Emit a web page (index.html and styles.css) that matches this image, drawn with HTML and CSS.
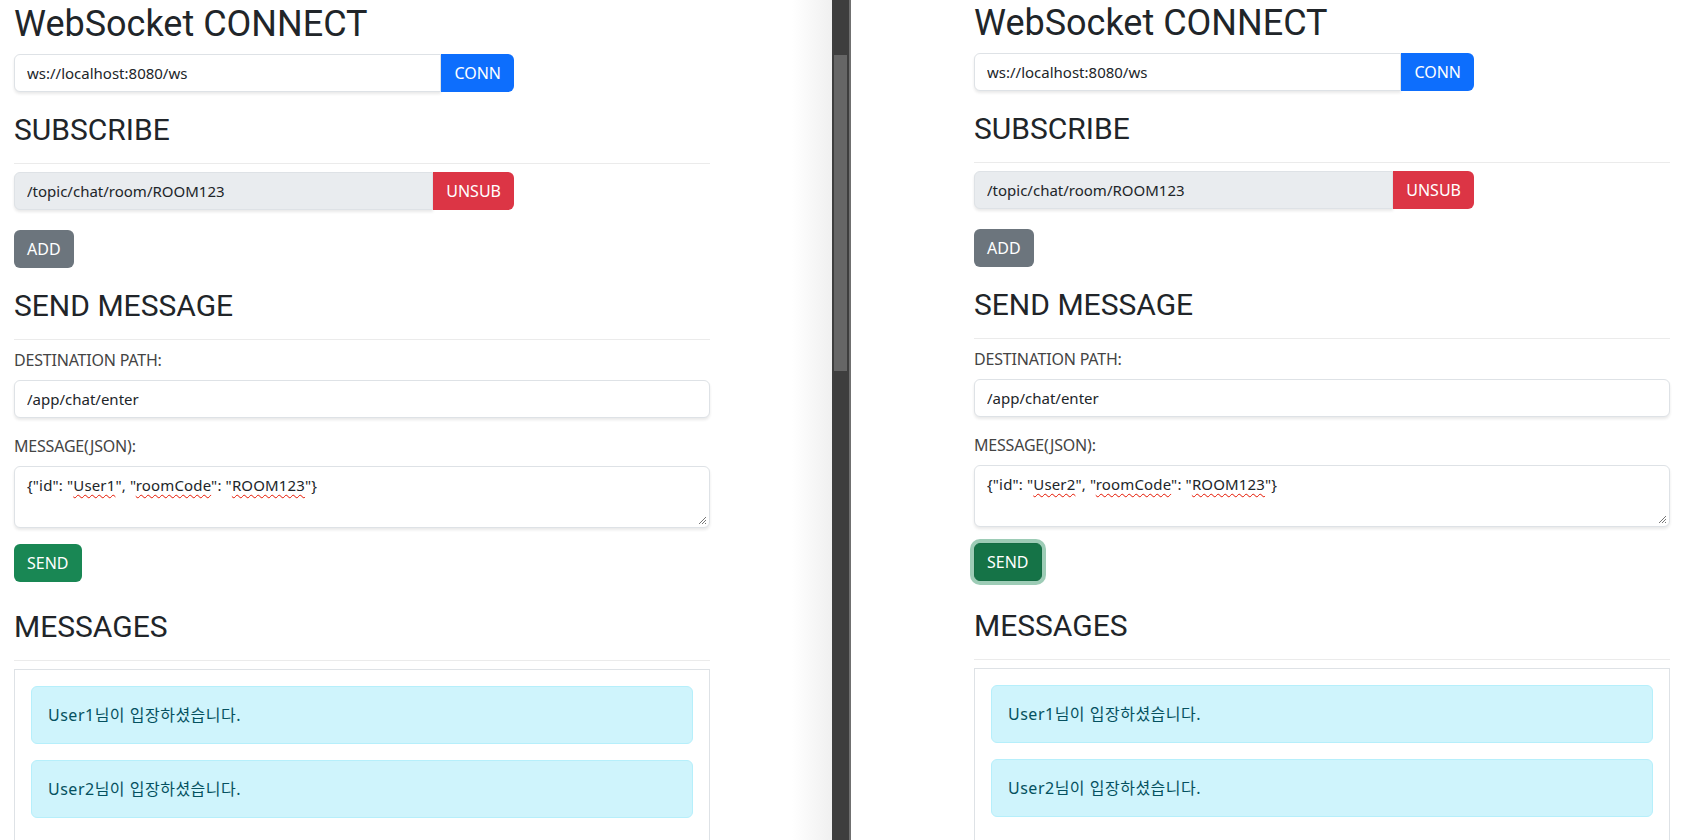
FILE: index.html
```html
<!DOCTYPE html>
<html lang="ko">
<head>
  <meta charset="UTF-8">
  <meta name="viewport" content="width=device-width, initial-scale=1">
  <title>WebSocket Test</title>
  <link rel="stylesheet" href="styles.css">
</head>
<body>
  <div class="desktop">

    <!-- 왼쪽 창 (User1) -->
    <section class="window">
      <div class="page">
        <h1 class="title">WebSocket CONNECT</h1>
        <div class="input-group">
          <input class="form-control" type="text" value="ws://localhost:8080/ws">
          <button class="btn btn-primary">CONN</button>
        </div>

        <h2 class="section-title">SUBSCRIBE</h2>
        <hr>
        <div class="input-group">
          <input class="form-control" type="text" value="/topic/chat/room/ROOM123" readonly>
          <button class="btn btn-danger">UNSUB</button>
        </div>
        <button class="btn btn-secondary btn-add">ADD</button>

        <h2 class="section-title">SEND MESSAGE</h2>
        <hr>
        <div class="field">
          <label class="form-label">DESTINATION PATH:</label>
          <input class="form-control" type="text" value="/app/chat/enter">
        </div>
        <div class="field">
          <label class="form-label">MESSAGE(JSON):</label>
          <div class="form-control textarea">{"id": "<span class="typo">User1</span>", "<span class="typo">roomCode</span>": "<span class="typo">ROOM123</span>"}<svg class="grip" width="10" height="10" viewBox="0 0 10 10"><path d="M9 2 L2 9 M9 5 L5 9 M9 8 L8 9" stroke="#777" stroke-width="1" fill="none"/></svg></div>
        </div>
        <button class="btn btn-success">SEND</button>

        <h2 class="section-title messages-title">MESSAGES</h2>
        <hr>
        <div class="messages">
          <div class="alert">User1님이 입장하셨습니다.</div>
          <div class="alert">User2님이 입장하셨습니다.</div>
        </div>
      </div>
    </section>

    <div class="scrollbar"><div class="thumb"></div></div>
    <div class="split"></div>

    <!-- 오른쪽 창 (User2) -->
    <section class="window window-right">
      <div class="page">
        <h1 class="title">WebSocket CONNECT</h1>
        <div class="input-group">
          <input class="form-control" type="text" value="ws://localhost:8080/ws">
          <button class="btn btn-primary">CONN</button>
        </div>

        <h2 class="section-title">SUBSCRIBE</h2>
        <hr>
        <div class="input-group">
          <input class="form-control" type="text" value="/topic/chat/room/ROOM123" readonly>
          <button class="btn btn-danger">UNSUB</button>
        </div>
        <button class="btn btn-secondary btn-add">ADD</button>

        <h2 class="section-title">SEND MESSAGE</h2>
        <hr>
        <div class="field">
          <label class="form-label">DESTINATION PATH:</label>
          <input class="form-control" type="text" value="/app/chat/enter">
        </div>
        <div class="field">
          <label class="form-label">MESSAGE(JSON):</label>
          <div class="form-control textarea">{"id": "<span class="typo">User2</span>", "<span class="typo">roomCode</span>": "<span class="typo">ROOM123</span>"}<svg class="grip" width="10" height="10" viewBox="0 0 10 10"><path d="M9 2 L2 9 M9 5 L5 9 M9 8 L8 9" stroke="#777" stroke-width="1" fill="none"/></svg></div>
        </div>
        <button class="btn btn-success focused">SEND</button>

        <h2 class="section-title messages-title">MESSAGES</h2>
        <hr>
        <div class="messages">
          <div class="alert">User1님이 입장하셨습니다.</div>
          <div class="alert">User2님이 입장하셨습니다.</div>
        </div>
      </div>
    </section>

  </div>
</body>
</html>
```

FILE: styles.css
```css
* {
  box-sizing: border-box;
}

body {
  margin: 0;
  font-family: "Noto Sans", "Noto Sans CJK KR", sans-serif;
  font-size: 16px;
  line-height: 24px;
  color: #212529;
  background: #fff;
  overflow: hidden;
}

.desktop {
  display: flex;
  height: 840px;
}

/* Browser windows */
.window {
  flex: none;
  width: 832px;
  padding: 5px 0 0 14px;
  overflow: hidden;
  background: linear-gradient(to right, #fff calc(100% - 40px), #f0f0f0 100%);
}

.window-right {
  flex: 1;
  width: auto;
  padding: 4px 0 0 123px;
  background: #fff;
}

.scrollbar {
  flex: none;
  width: 17px;
  padding: 55px 2px 0;
  background: #3e3e3e;
}

.thumb {
  height: 316px;
  background: #666;
}

.split {
  flex: none;
  width: 2px;
  background: #707070;
}

.page {
  width: 696px;
}

/* Headings */
.title,
.section-title {
  margin: 0;
  font-family: Roboto, sans-serif;
  font-weight: 400;
  line-height: 38px;
  color: #212529;
}

.title {
  font-size: 36px;
  margin-bottom: 11px;
}

.section-title {
  font-size: 30px;
  margin: 19px 0 14px;
}

.messages-title {
  margin-top: 26px;
}

hr {
  margin: 0 0 8px;
  border: 0;
  border-top: 1px solid #ebebeb;
}

/* Form controls */
.input-group {
  display: flex;
  width: 500px;
}

.form-control {
  display: block;
  width: 100%;
  height: 38px;
  padding: 6px 12px;
  font: inherit;
  font-size: 15px;
  color: #212529;
  background: #fff;
  border: 1px solid #dee2e6;
  border-radius: 6px;
  box-shadow: 0 2px 3px rgba(0, 0, 0, 0.09);
  outline: none;
}

.form-control[readonly] {
  background: #e9ecef;
}

.input-group .form-control {
  flex: 1;
  min-width: 0;
  border-radius: 6px 0 0 6px;
}

.textarea {
  position: relative;
  height: 62px;
  white-space: pre;
  letter-spacing: 0.15px;
}

.typo {
  text-decoration: underline wavy #e51400;
  text-decoration-thickness: 1px;
  text-underline-offset: 3px;
  text-decoration-skip-ink: none;
}

.grip {
  position: absolute;
  right: 2px;
  bottom: 2px;
}

.field {
  margin-bottom: 16px;
}

.form-label {
  display: block;
  margin-bottom: 8px;
  color: #444;
  letter-spacing: -0.2px;
}

/* Buttons */
.btn {
  font: inherit;
  line-height: 24px;
  padding: 6px 12px;
  color: #fff;
  border: 1px solid transparent;
  border-radius: 6px;
  cursor: pointer;
}

.input-group .btn {
  border-radius: 0 6px 6px 0;
}

.btn-primary {
  background: #0d6efd;
}

.btn-danger {
  background: #dc3545;
}

.btn-secondary {
  background: #6c757d;
}

.btn-add {
  display: block;
  margin-top: 20px;
}

.btn-success {
  display: block;
  background: #198754;
}

.btn-success.focused {
  background: #157347;
  border-color: #146c43;
  box-shadow: 0 0 0 4px rgba(60, 153, 110, 0.5);
}

/* Messages */
.messages {
  height: 300px;
  padding: 16px;
  border: 1px solid #dee2e6;
}

.alert {
  margin-bottom: 16px;
  padding: 16px;
  color: #055160;
  background: #cff4fc;
  border: 1px solid #b6effb;
  border-radius: 6px;
  letter-spacing: 0.5px;
}
```
